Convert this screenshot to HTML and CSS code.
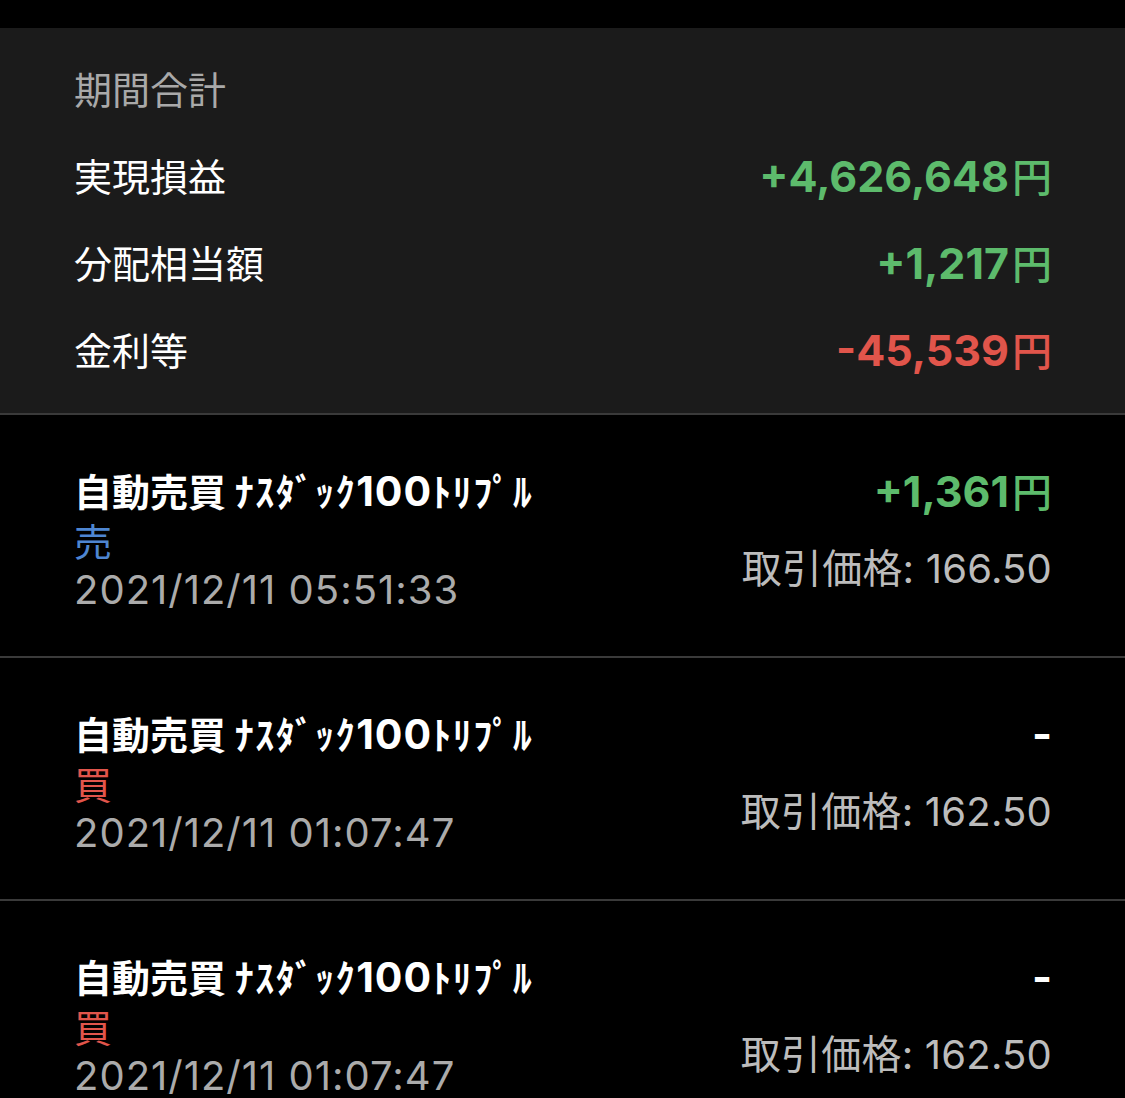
FILE: index.html
```html
<!DOCTYPE html>
<html lang="ja">
<head>
<meta charset="utf-8">
<link rel="stylesheet" href="styles.css">
</head>
<body>
<div class="topbar"></div>
<section class="summary">
  <div class="srow"><span class="period">期間合計</span></div>
  <div class="srow"><span class="label">実現損益</span><span class="amount pos">+4,626,648<span class="yen">円</span></span></div>
  <div class="srow"><span class="label">分配相当額</span><span class="amount pos">+1,217<span class="yen">円</span></span></div>
  <div class="srow"><span class="label">金利等</span><span class="amount neg">-45,539<span class="yen">円</span></span></div>
</section>
<div class="list">
  <div class="item">
    <div class="left">
      <div class="title">自動売買 <span class="kana">ﾅｽﾀﾞｯｸ</span><span class="num">100</span><span class="kana">ﾄﾘﾌﾟﾙ</span></div>
      <div class="side sell">売</div>
      <div class="date">2021/12/11 05:51:33</div>
    </div>
    <div class="right">
      <div class="pl pos">+1,361<span class="yen">円</span></div>
      <div class="price">取引価格: 166.50</div>
    </div>
  </div>
  <div class="item">
    <div class="left">
      <div class="title">自動売買 <span class="kana">ﾅｽﾀﾞｯｸ</span><span class="num">100</span><span class="kana">ﾄﾘﾌﾟﾙ</span></div>
      <div class="side buy">買</div>
      <div class="date">2021/12/11 01:07:47</div>
    </div>
    <div class="right">
      <div class="pl none">-</div>
      <div class="price">取引価格: 162.50</div>
    </div>
  </div>
  <div class="item">
    <div class="left">
      <div class="title">自動売買 <span class="kana">ﾅｽﾀﾞｯｸ</span><span class="num">100</span><span class="kana">ﾄﾘﾌﾟﾙ</span></div>
      <div class="side buy">買</div>
      <div class="date">2021/12/11 01:07:47</div>
    </div>
    <div class="right">
      <div class="pl none">-</div>
      <div class="price">取引価格: 162.50</div>
    </div>
  </div>
</div>
</body>
</html>
```

FILE: styles.css
```css
* { box-sizing: border-box; margin: 0; padding: 0; }
html, body { background: #000; }
body {
  font-family: Inter, "Noto Sans CJK JP", sans-serif;
  color: #fff;
  overflow: hidden;
  height: 1098px;
}
.topbar { height: 28px; background: #000; }
.summary {
  background: #1b1b1b;
  padding: 16px 73px 21px 74px;
  border-bottom: 2px solid #3a3a3a;
}
.srow {
  height: 87px;
  display: flex;
  align-items: center;
  justify-content: space-between;
}
.period { font-size: 38px; color: #a9a9a9; font-family: "Noto Sans CJK JP", sans-serif; }
.label { font-size: 38px; color: #fff; font-family: "Noto Sans CJK JP", sans-serif; }
.amount { font-size: 43px; font-weight: 700; }
.yen { font-family: "Noto Sans CJK JP", sans-serif; font-weight: 500; font-size: 40px; margin-left: 3px; }
.pos { color: #5dbb6c; }
.neg { color: #e1554b; }
.item {
  display: flex;
  justify-content: space-between;
  padding: 50px 73px 41px 74px;
  border-bottom: 2px solid #3a3a3a;
}
.left > div, .right > div { line-height: 50px; height: 50px; white-space: nowrap; }
.title { font-size: 38px; font-weight: 700; font-family: "Noto Sans CJK JP", sans-serif; }
.kana { letter-spacing: 1.5px; }
.num { font-family: Inter, sans-serif; font-size: 41px; font-weight: 700; letter-spacing: 1px; }
.side { font-size: 38px; font-family: "Noto Sans CJK JP", sans-serif; }
.sell { color: #4e86d2; }
.buy { color: #e1554b; }
.date { font-size: 40px; color: #ababab; letter-spacing: 1px; }
.right { display: flex; flex-direction: column; align-items: flex-end; }
.pl { font-size: 43px; font-weight: 700; }
.none { color: #fff; }
.price { font-size: 40px; color: #bcbcbc; margin-top: 29px; letter-spacing: 0.2px; }
```
